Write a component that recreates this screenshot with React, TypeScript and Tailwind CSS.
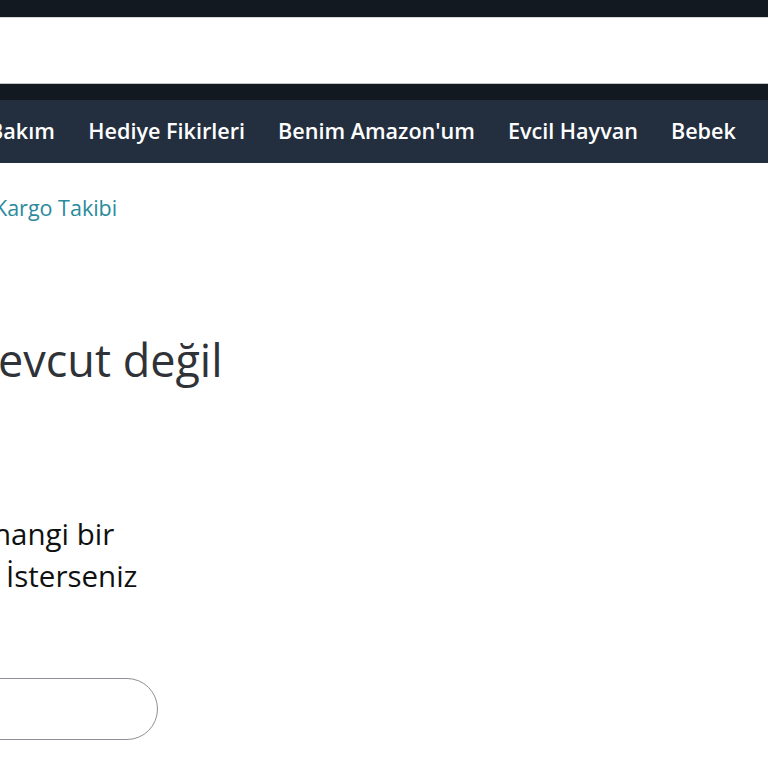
import React from 'react'

const navItems = ['Bakım', 'Hediye Fikirleri', "Benim Amazon'um", 'Evcil Hayvan', 'Bebek', 'Kitap']

const App = () => {
  return (
    <div className="w-[768px] h-[768px] overflow-hidden bg-white font-['Open_Sans','Liberation_Sans',sans-serif]">
      {/* top strip */}
      <div className="h-[17px] bg-[#131921]" />
      <div className="h-px bg-[#d5d9d9]" />
      <div className="h-[65px] bg-white" />
      <div className="h-px bg-[#c4c4c4]" />
      <div className="h-[16px] bg-[#131921]" />

      {/* category nav */}
      <nav className="h-[63px] bg-[#232f3e] flex items-center whitespace-nowrap overflow-hidden text-white font-semibold text-[21.6px]">
        {navItems.map((item, i) => (
          <a key={item} className={i === 0 ? '-ml-[28px] px-[17px]' : 'px-[16.5px]'}>
            {item}
          </a>
        ))}
      </nav>

      {/* breadcrumb */}
      <div className="mt-[30px] -ml-[6px] text-[21.5px] leading-[30px] text-[#2a8a9c] whitespace-nowrap">Kargo Takibi</div>

      {/* heading */}
      <h1 className="mt-[110px] -ml-[2px] text-[45px] leading-[54px] text-[#2f3338] whitespace-nowrap">evcut değil</h1>

      {/* message */}
      <div className="mt-[126px] text-[29.5px] leading-[42px] text-[#0f1111] whitespace-nowrap">
        <p className="-ml-[7px]">hangi bir</p>
        <p className="pl-[6px]">İsterseniz</p>
      </div>

      {/* button */}
      <div className="mt-[81px] -ml-[202px] w-[360px] h-[62px] rounded-full border border-[#8d9096] bg-white" />
    </div>
  )
}

export default App
